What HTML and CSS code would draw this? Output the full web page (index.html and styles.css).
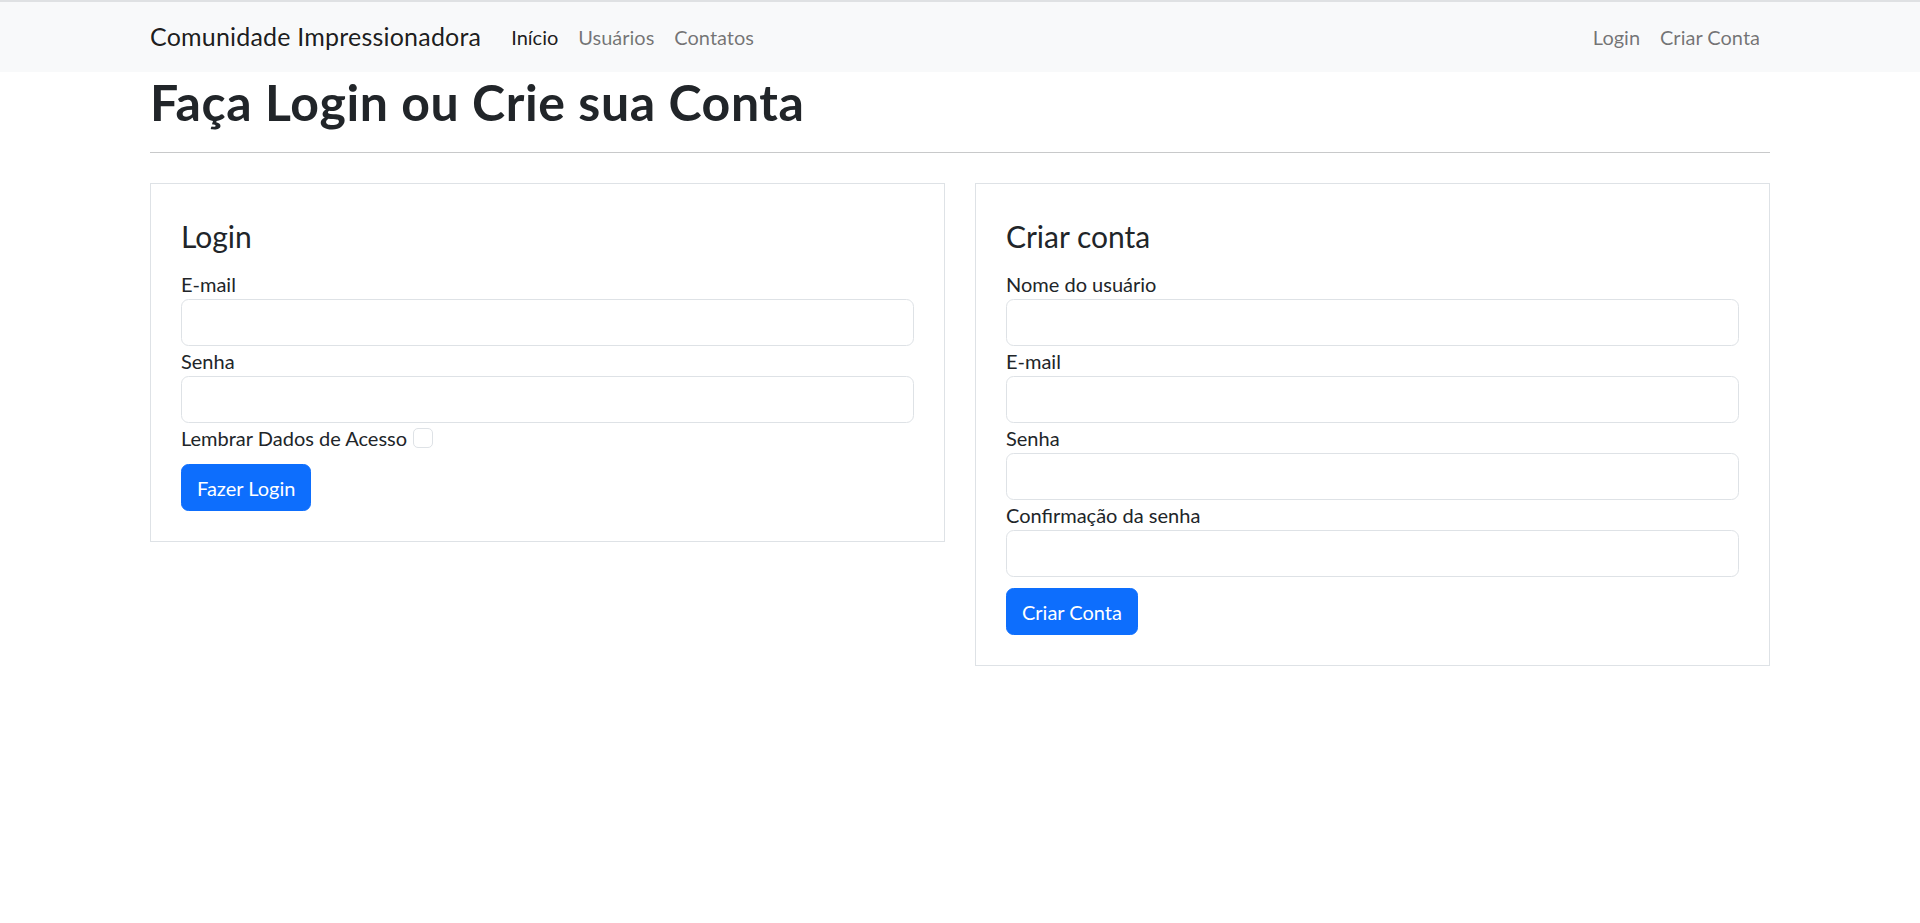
FILE: index.html
```html
<!DOCTYPE html>
<html lang="pt-BR">
<head>
<meta charset="utf-8">
<title>Comunidade Impressionadora</title>
<link rel="stylesheet" href="styles.css">
</head>
<body>
<nav class="navbar">
  <div class="container nav-inner">
    <a class="brand" href="#">Comunidade Impressionadora</a>
    <ul class="nav-list">
      <li><a class="nav-link active" href="#">Início</a></li>
      <li><a class="nav-link" href="#">Usuários</a></li>
      <li><a class="nav-link" href="#">Contatos</a></li>
    </ul>
    <ul class="nav-list nav-right">
      <li><a class="nav-link" href="#">Login</a></li>
      <li><a class="nav-link" href="#">Criar Conta</a></li>
    </ul>
  </div>
</nav>
<main class="container">
  <h1 class="page-title">Faça Login ou Crie sua Conta</h1>
  <hr class="divider">
  <div class="row">
    <form class="card">
      <fieldset class="fieldset">
        <legend class="legend">Login</legend>
        <label class="label" for="le">E-mail</label>
        <input class="control" id="le" type="text">
        <label class="label" for="ls">Senha</label>
        <input class="control" id="ls" type="password">
        <div class="check-row">
          <label class="check-label" for="lc">Lembrar Dados de Acesso</label>
          <input class="check" id="lc" type="checkbox">
        </div>
      </fieldset>
      <button class="btn" type="button">Fazer Login</button>
    </form>
    <form class="card">
      <fieldset class="fieldset">
        <legend class="legend">Criar conta</legend>
        <label class="label" for="cn">Nome do usuário</label>
        <input class="control" id="cn" type="text">
        <label class="label" for="ce">E-mail</label>
        <input class="control" id="ce" type="text">
        <label class="label" for="cs">Senha</label>
        <input class="control" id="cs" type="password">
        <label class="label" for="cc">Confirmação da senha</label>
        <input class="control" id="cc" type="password">
      </fieldset>
      <button class="btn" type="button">Criar Conta</button>
    </form>
  </div>
</main>
</body>
</html>
```
FILE: styles.css
```css
* { box-sizing: border-box; }
html, body { margin: 0; padding: 0; }
body {
  font-family: "Lato", "Open Sans", sans-serif;
  font-size: 20px;
  line-height: 30px;
  color: #212529;
  background: #fff;
  border-top: 2px solid #dfe1e3;
}
.container {
  width: 1620px;
  margin: 0 auto;
}
.navbar {
  background: #f8f9fa;
  padding: 10px 0;
}
.nav-inner {
  display: flex;
  align-items: center;
}
.brand {
  font-size: 25px;
  line-height: 37.5px;
  padding: 6.25px 0;
  margin-right: 20px;
  letter-spacing: 0.2px;
  color: rgba(0,0,0,.9);
  text-decoration: none;
}
.nav-list {
  display: flex;
  list-style: none;
  margin: 0;
  padding: 0;
}
.nav-right { margin-left: auto; }
.nav-link {
  display: block;
  padding: 10px;
  color: rgba(0,0,0,.55);
  text-decoration: none;
}
.nav-link.active { color: rgba(0,0,0,.9); }
.page-title {
  font-size: 50px;
  font-weight: 700;
  line-height: 60px;
  letter-spacing: 0.6px;
  margin: 0;
}
.divider {
  border: 0;
  border-top: 1px solid #c8c9ca;
  margin: 20px 0;
  height: 0;
}
.row {
  display: grid;
  grid-template-columns: 1fr 1fr;
  column-gap: 30px;
  align-items: start;
  margin-top: 30px;
}
.card {
  border: 1px solid #dee2e6;
  padding: 30px;
  margin: 0;
}
.fieldset {
  border: 0;
  margin: 0;
  padding: 0;
  min-width: 0;
}
.legend {
  font-size: 30px;
  line-height: 45px;
  padding: 0;
  margin-bottom: 10px;
  float: left;
  width: 100%;
}
.legend + * { clear: left; }
.label {
  display: block;
}
.control {
  display: block;
  width: 100%;
  height: 47px;
  border: 1px solid #dee2e6;
  border-radius: 7.5px;
  background: #fff;
  font: inherit;
  padding: 7.5px 15px;
}
.check-row {
  display: flex;
  align-items: center;
  height: 30px;
}
.check {
  appearance: none;
  -webkit-appearance: none;
  width: 20px;
  height: 20px;
  margin: 0 0 0 6px;
  border: 1px solid #dee2e6;
  border-radius: 5px;
  background: #fff;
}
.btn {
  display: inline-block;
  margin-top: 11px;
  padding: 7.5px 15px;
  height: 47px;
  font: inherit;
  line-height: 30px;
  color: #fff;
  background: #0d6efd;
  border: 1px solid #0d6efd;
  border-radius: 7.5px;
}
```
